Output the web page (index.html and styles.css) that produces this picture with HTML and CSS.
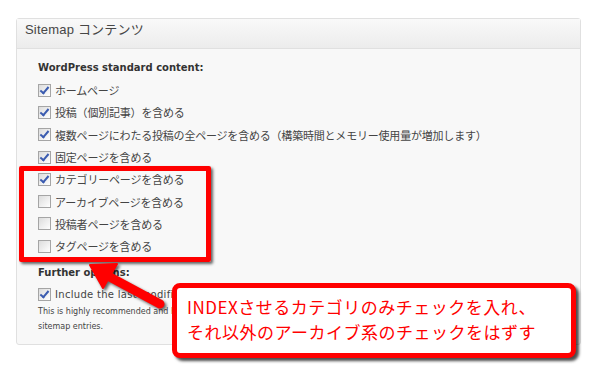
FILE: index.html
```html
<!DOCTYPE html>
<html lang="ja">
<head>
  <meta charset="UTF-8" />
  <meta name="viewport" content="width=device-width, initial-scale=1.0" />
  <title>Sitemap コンテンツ</title>
  <link rel="stylesheet" href="styles.css">
</head>
<body>
  <div class="page">
    <div class="panel">
      <div class="panel-head">Sitemap コンテンツ</div>
      <div class="panel-body">
        <h4 class="group-title">WordPress standard content:</h4>
        <ul class="opts">
          <li><span class="cb on"></span>ホームページ</li>
          <li><span class="cb on"></span>投稿（個別記事）を含める</li>
          <li><span class="cb on"></span>複数ページにわたる投稿の全ページを含める（構築時間とメモリー使用量が増加します）</li>
          <li><span class="cb on"></span>固定ページを含める</li>
          <li><span class="cb on"></span>カテゴリーページを含める</li>
          <li><span class="cb"></span>アーカイブページを含める</li>
          <li><span class="cb"></span>投稿者ページを含める</li>
          <li><span class="cb"></span>タグページを含める</li>
        </ul>
        <h4 class="group-title further">Further options:</h4>
        <div class="opt-en"><span class="cb on"></span>Include the last modification time.</div>
        <p class="desc">This is highly recommended and helps the search engines to know when your content has changed. This option affects <i>all</i> sitemap entries.</p>
      </div>
    </div>

    <!-- annotations -->
    <div class="mark"></div>
    <svg class="arrow" width="600" height="366" viewBox="0 0 600 366">
      <line x1="108" y1="276" x2="160" y2="304" stroke="#f00" stroke-width="9" stroke-linecap="round" />
      <polygon points="90,265 103,288 117,264" fill="#f00" stroke="#f00" stroke-width="2" stroke-linejoin="round" />
    </svg>
    <div class="callout">INDEXさせるカテゴリのみチェックを入れ、<br>それ以外のアーカイブ系のチェックをはずす</div>
  </div>
</body>
</html>
```

FILE: styles.css
```css
body { margin: 0; background: #fff; color: #333; font-family: "DejaVu Sans", "Noto Sans CJK JP", sans-serif; }
.page { position: relative; width: 600px; height: 366px; padding: 18px 0 0 16px; box-sizing: border-box; }

.panel { width: 565px; height: 327px; box-sizing: border-box; border: 1px solid #e0e0e0; border-radius: 3px; background: #f8f8f8; }
.panel-head { height: 30px; box-sizing: border-box; padding-left: 8px; line-height: 29px; border-bottom: 1px solid #e0e0e0; background: linear-gradient(#f9f9f9, #ececec); font: 13px "Liberation Sans", "Noto Sans CJK JP", sans-serif; color: #464646; letter-spacing: 0.2px; }
.panel-body { padding: 9px 0 0 21px; }

.group-title { margin: 0; font-size: 10px; font-weight: bold; line-height: 20px; color: #333; }
.further { margin-top: 6px; }

.opts { list-style: none; margin: 1px 0 0; padding: 0; }
.opts li { display: flex; align-items: center; height: 22.3px; font: 11px "Noto Sans CJK JP", sans-serif; letter-spacing: -0.2px; color: #444; white-space: nowrap; }

.cb { width: 11px; height: 11px; margin-right: 4px; flex: none; border: 1px solid #a5a5a5; background: linear-gradient(135deg, #dcdcdc, #fff); position: relative; }
.cb.on::after { content: ""; position: absolute; left: 3px; top: 0px; width: 3px; height: 7px; border: solid #3b5cb0; border-width: 0 2px 2px 0; transform: rotate(40deg); }

.opt-en { display: flex; align-items: center; height: 20px; margin-top: 1px; font-size: 10px; color: #444; letter-spacing: 0.3px; white-space: nowrap; overflow: hidden; }
.desc { margin: 0; padding-right: 20px; font-size: 8px; line-height: 15px; color: #444; }

.mark { position: absolute; left: 19px; top: 166px; width: 192px; height: 96px; box-sizing: border-box; border: 5px solid #f00; border-radius: 2px; box-shadow: 2px 2px 3px rgba(0, 0, 0, 0.6); }
.arrow { position: absolute; left: 0; top: 0; filter: drop-shadow(2px 2px 1.5px rgba(0, 0, 0, 0.6)); }
.callout { position: absolute; left: 172px; top: 283px; width: 404px; height: 75px; box-sizing: border-box; padding: 6px 0 0 10px; border: 5px solid #f00; border-radius: 8px; background: #fff; box-shadow: 3px 3px 3px rgba(0, 0, 0, 0.7); font: 17px/25px "Noto Sans CJK JP", sans-serif; letter-spacing: 0.5px; color: #f00; white-space: nowrap; }
```
